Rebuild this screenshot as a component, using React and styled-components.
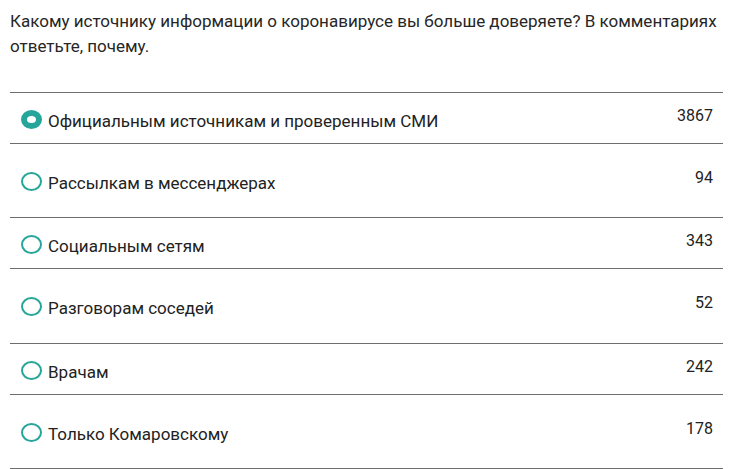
import React from "react";
import styled, { createGlobalStyle } from "styled-components";

const Global = createGlobalStyle`
  body {
    margin: 0;
    background: #ffffff;
    font-family: Roboto, "Liberation Sans", sans-serif;
    color: #222222;
  }
`;

const options = [
  { label: "Официальным источникам и проверенным СМИ", count: 3867, checked: true, height: 51 },
  { label: "Рассылкам в мессенджерах", count: 94, height: 74, tall: true },
  { label: "Социальным сетям", count: 343, height: 51 },
  { label: "Разговорам соседей", count: 52, height: 75, tall: true },
  { label: "Врачам", count: 242, height: 51 },
  { label: "Только Комаровскому", count: 178, height: 74, tall: true },
];

const Poll = () => {
  return (
    <Wrap>
      <Global />
      <Question>
        Какому источнику информации о коронавирусе вы больше доверяете? В комментариях
        ответьте, почему.
      </Question>
      <List>
        {options.map((o) => (
          <Row key={o.label} $h={o.height} $tall={o.tall}>
            <Option>
              <Radio $checked={o.checked} />
              <Label>{o.label}</Label>
            </Option>
            <Count>{o.count}</Count>
          </Row>
        ))}
      </List>
    </Wrap>
  );
};

const Wrap = styled.div`
  width: 713px;
  padding: 9px 0 0 10px;
`;

const Question = styled.p`
  margin: 0;
  font-size: 17px;
  line-height: 25px;
  color: #262626;
`;

const List = styled.div`
  margin-top: 33px;
  border-bottom: 1px solid #6e6e6e;
`;

const Row = styled.div`
  box-sizing: border-box;
  height: ${(p) => p.$h}px;
  border-top: 1px solid #6e6e6e;
  padding: ${(p) => (p.$tall ? 28 : 17)}px 10px 0 11px;
  display: flex;
  justify-content: space-between;
  align-items: flex-start;
`;

const Option = styled.div`
  display: flex;
  align-items: flex-start;
`;

const Radio = styled.span`
  box-sizing: border-box;
  flex: none;
  width: 21px;
  height: 19px;
  border-radius: 50%;
  border: ${(p) => (p.$checked ? "6px" : "2px")} solid #26a69a;
  margin-right: 6px;
`;

const Label = styled.span`
  font-size: 17px;
  line-height: 20px;
  margin-top: 1px;
  color: #222222;
`;

const Count = styled.span`
  font-size: 16px;
  line-height: 18px;
  margin-top: -3px;
  color: #222222;
`;

export default Poll;
